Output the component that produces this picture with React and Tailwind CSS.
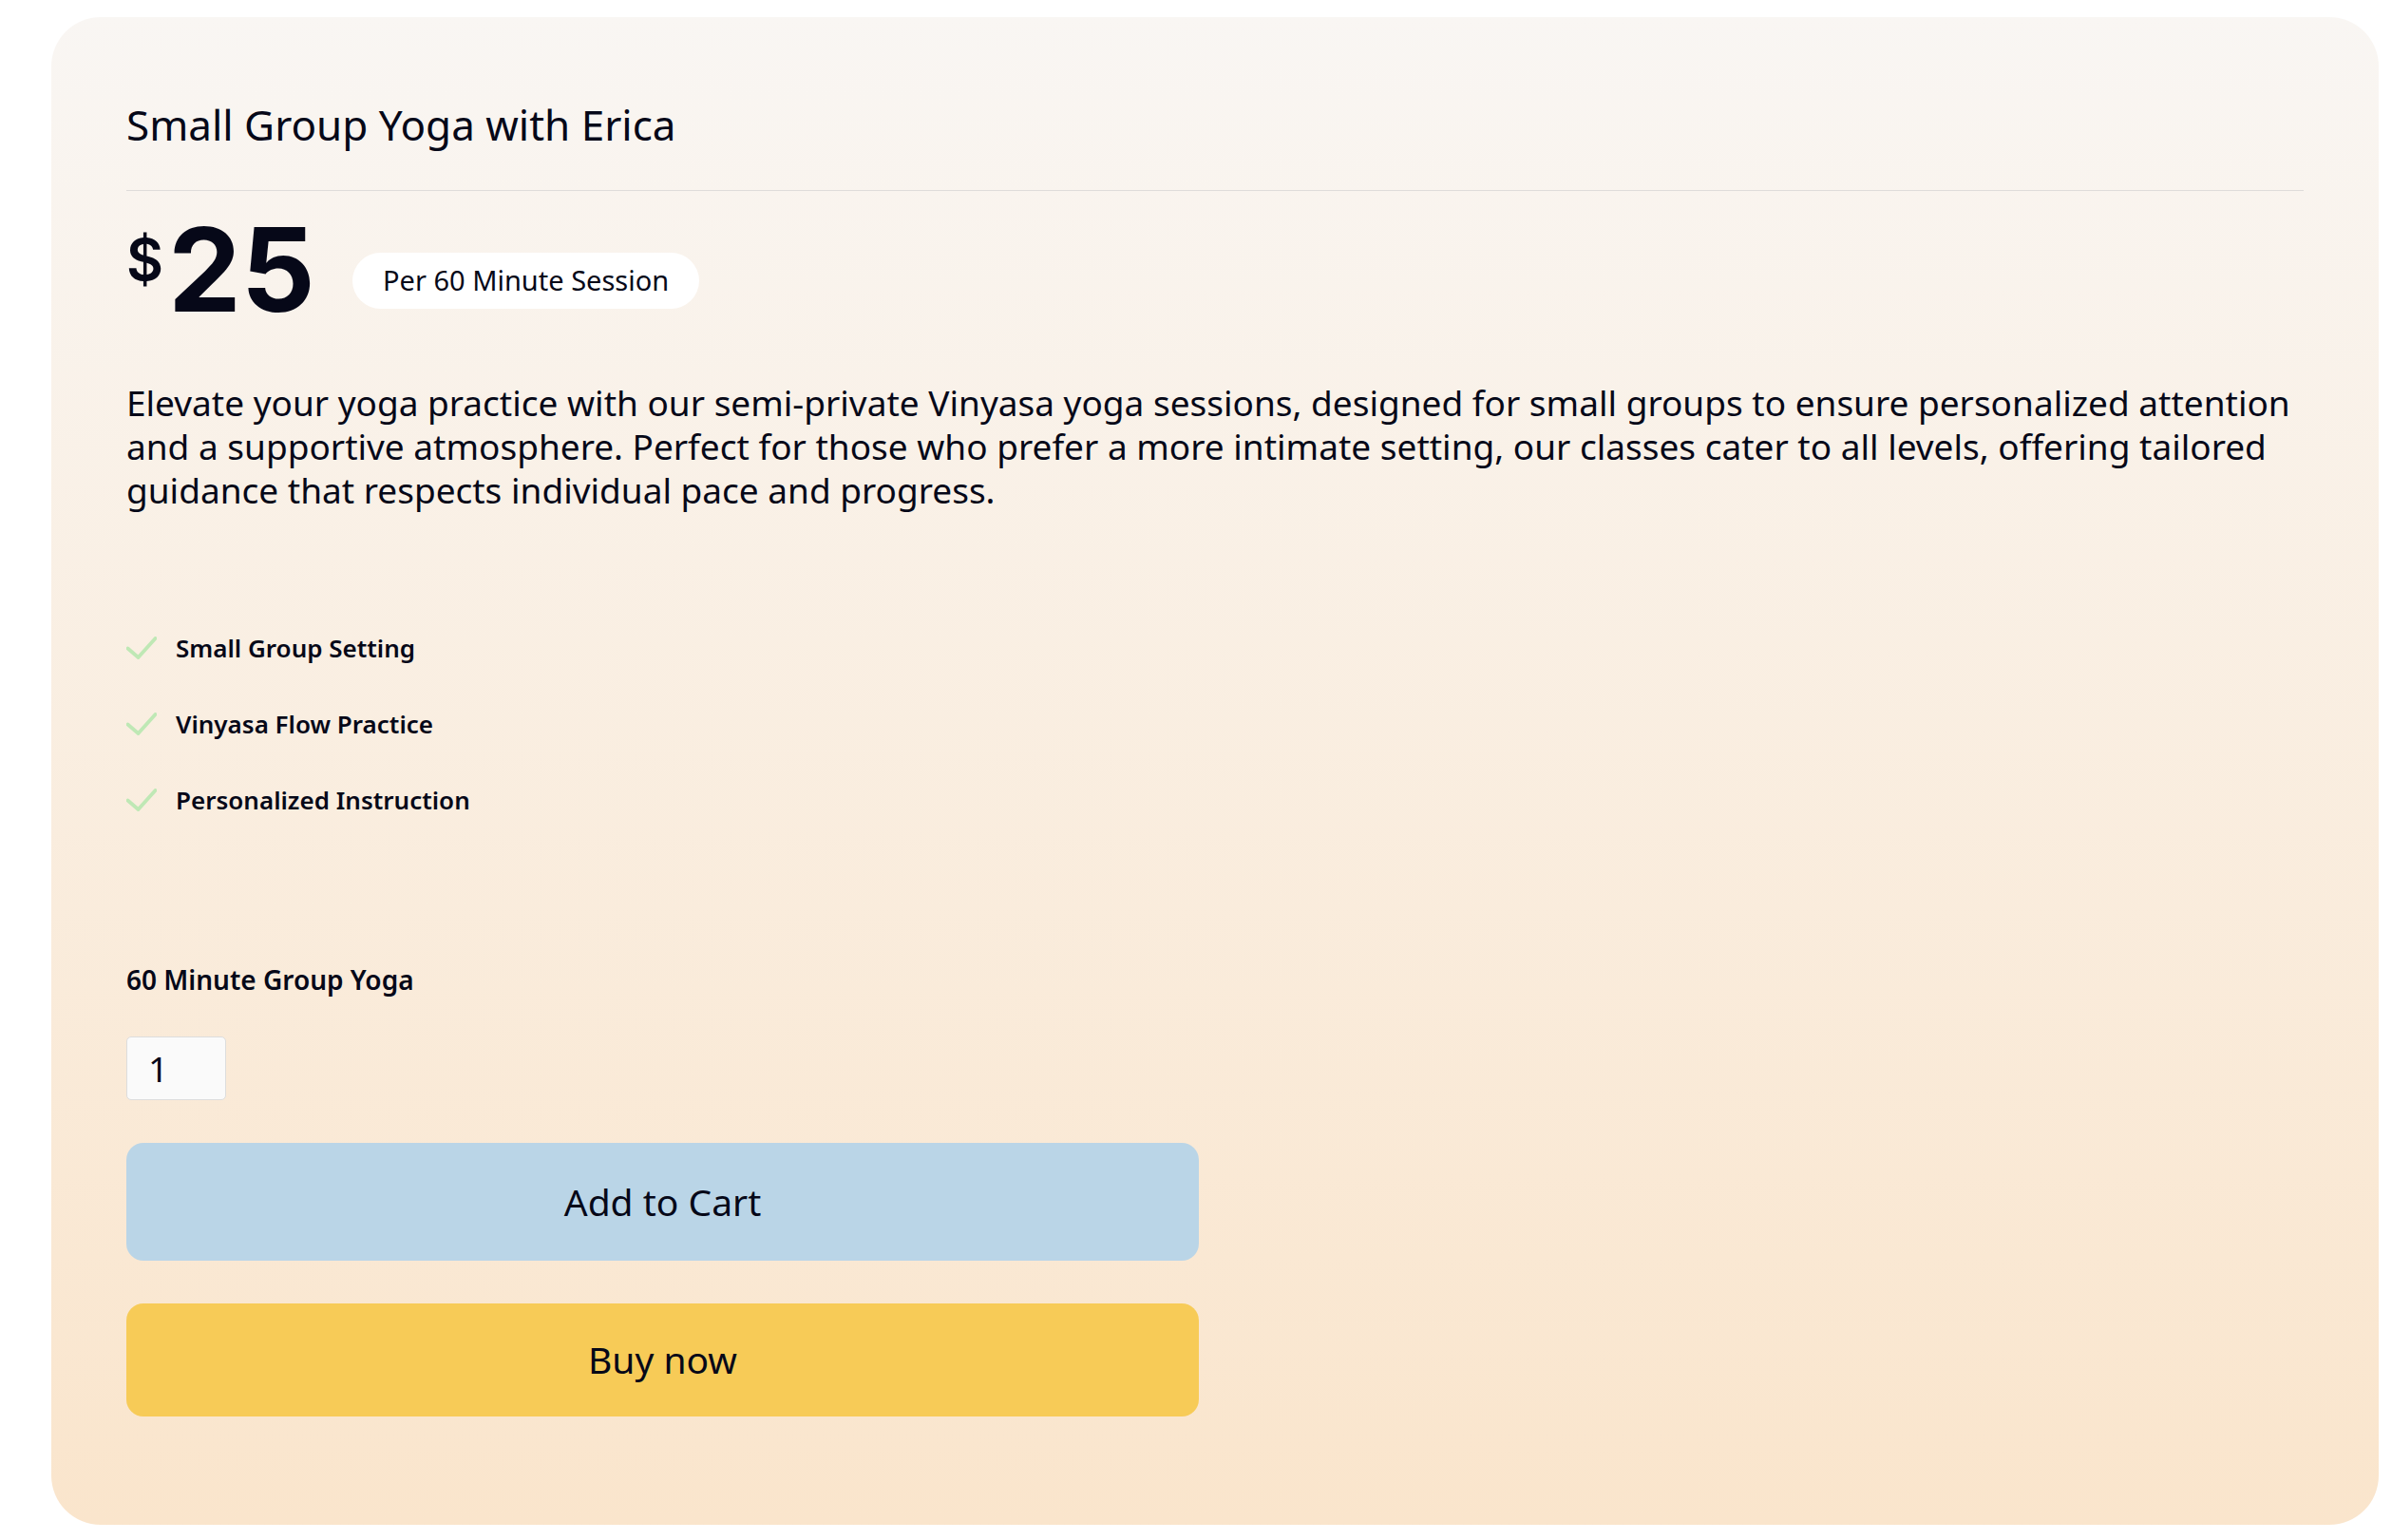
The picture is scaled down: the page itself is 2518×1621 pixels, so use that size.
import React from "react";

const features = ["Small Group Setting", "Vinyasa Flow Practice", "Personalized Instruction"];

function CheckIcon() {
  return (
    <svg className="h-6 w-8 shrink-0" viewBox="0 0 32 24" fill="none" aria-hidden="true">
      <path d="M1.5 12.5 L12.5 22 L30.5 2" stroke="#bfe8b5" strokeWidth="3.8" strokeLinecap="round" strokeLinejoin="miter" />
    </svg>
  );
}

export default function App() {
  return (
    <main className="bg-white pt-[18px] pr-[14px] pb-4 pl-[54px] font-['Noto_Sans','Open_Sans',sans-serif] text-[#060818]">
      <section className="rounded-[52px] bg-linear-to-b from-[#f9f6f3] to-[#fae5cc] px-[79px] pt-20 pb-[114px]">
        <h1 className="border-b border-[#dfdcda] pb-9 text-[44px] leading-[66px]">Small Group Yoga with Erica</h1>

        <div className="flex items-start pt-7">
          <p className="flex w-48 items-start font-['Inter',sans-serif]">
            <span className="w-11 shrink-0 text-[60px] leading-[88px] font-semibold">$</span>
            <span className="text-[122px] leading-[110px] font-bold">25</span>
          </p>
          <p className="mt-[37px] ml-[46px] rounded-full bg-white px-8 pb-0.5 text-[29px] leading-[57px]">Per 60 Minute Session</p>
        </div>

        <p className="pt-[62px] text-[37px] leading-[46px]">
          Elevate your yoga practice with our semi-private Vinyasa yoga sessions, designed for small groups to ensure
          personalized attention and a supportive atmosphere. Perfect for those who prefer a more intimate setting, our
          classes cater to all levels, offering tailored guidance that respects individual pace and progress.
        </p>

        <ul className="flex flex-col gap-10 pt-[123px] text-[26px] leading-10 font-semibold">
          {features.map((feature) => (
            <li key={feature} className="flex items-center gap-5">
              <CheckIcon />
              {feature}
            </li>
          ))}
        </ul>

        <form className="flex flex-col items-start pt-[149px]" onSubmit={(e) => e.preventDefault()}>
          <label htmlFor="quantity" className="text-[28px] leading-10 font-semibold">
            60 Minute Group Yoga
          </label>
          <input
            id="quantity"
            type="text"
            inputMode="numeric"
            defaultValue="1"
            className="mt-10 h-[67px] w-[105px] rounded-[5px] border border-[#dddddd] bg-[#fafafa] px-[22px] text-[37px]"
          />
          <button type="submit" className="mt-[45px] h-[124px] w-[1129px] max-w-full rounded-[18px] bg-[#bad5e7] text-[39px]">
            Add to Cart
          </button>
          <button type="button" className="mt-[45px] h-[119px] w-[1129px] max-w-full rounded-[18px] bg-[#f7cb57] text-[39px]">
            Buy now
          </button>
        </form>
      </section>
    </main>
  );
}
